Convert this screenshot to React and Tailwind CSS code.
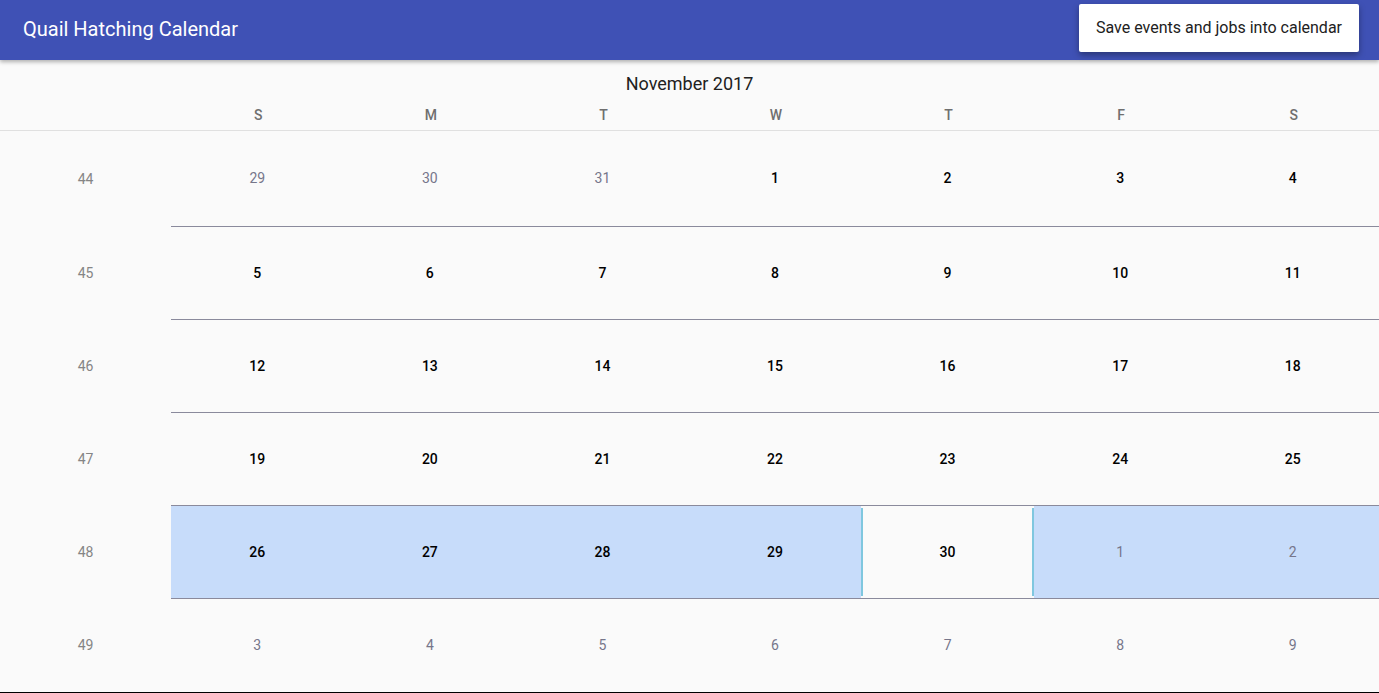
import React from 'react';

const DAYS = ['S', 'M', 'T', 'W', 'T', 'F', 'S'];

// each week: [weekNumber, [[day, inMonth], ...]]
const WEEKS = [
  [44, [[29, false], [30, false], [31, false], [1, true], [2, true], [3, true], [4, true]]],
  [45, [[5, true], [6, true], [7, true], [8, true], [9, true], [10, true], [11, true]]],
  [46, [[12, true], [13, true], [14, true], [15, true], [16, true], [17, true], [18, true]]],
  [47, [[19, true], [20, true], [21, true], [22, true], [23, true], [24, true], [25, true]]],
  [48, [[26, true], [27, true], [28, true], [29, true], [30, true], [1, false], [2, false]]],
  [49, [[3, false], [4, false], [5, false], [6, false], [7, false], [8, false], [9, false]]],
];

const SELECTED_WEEK = 48;
const SELECTED_DAY = 30;

function DayCell({ day, inMonth, selected }) {
  if (selected) {
    return (
      <div className="flex py-[2px] bg-[#fafafa]">
        <div className="flex-1 flex items-center justify-center border-l-2 border-r-2 border-[#7fc7df]">
          <span className="text-[14px] font-medium text-black">{day}</span>
        </div>
      </div>
    );
  }
  return (
    <div className="flex items-center justify-center">
      <span className={inMonth ? 'text-[14px] font-medium text-black' : 'text-[14px] text-[#76768a]'}>
        {day}
      </span>
    </div>
  );
}

function WeekRow({ week, days, first, last }) {
  const highlighted = week === SELECTED_WEEK;
  return (
    <div className={`flex ${first ? 'h-[96px]' : 'h-[93px]'}`}>
      <div className="w-[171px] flex items-center justify-center">
        <span className="text-[14px] text-[#858585]">{week}</span>
      </div>
      <div
        className={`flex-1 grid grid-cols-7 ${last ? '' : 'border-b border-[#8a8a9c]'} ${
          highlighted ? 'bg-[#c7dcfa]' : ''
        }`}
      >
        {days.map(([day, inMonth], i) => (
          <DayCell
            key={i}
            day={day}
            inMonth={inMonth}
            selected={highlighted && inMonth && day === SELECTED_DAY}
          />
        ))}
      </div>
    </div>
  );
}

export default function App() {
  return (
    <div className="w-[1379px] h-[693px] overflow-hidden bg-[#fafafa] flex flex-col font-['Roboto',sans-serif]">
      {/* App bar */}
      <header className="relative z-10 h-[60px] shrink-0 bg-[#3f51b5] flex items-start justify-between shadow-[0_2px_4px_rgba(0,0,0,0.3)]">
        <h1 className="pl-[23px] pt-[16px] text-[20px] leading-[26px] text-white">Quail Hatching Calendar</h1>
        <button className="mt-[4px] mr-[20px] h-[48px] w-[280px] bg-white rounded-[2px] text-[16px] text-[#212121] shadow-[0_3px_6px_rgba(0,0,0,0.35)]">
          Save events and jobs into calendar
        </button>
      </header>

      {/* Calendar */}
      <main className="flex-1 flex flex-col">
        <div className="pt-[12px] h-[36px] text-center text-[18px] leading-[24px] text-[#212121]">November 2017</div>
        <div className="flex h-[35px] border-b border-[#e0e0e0]">
          <div className="w-[171px]" />
          <div className="flex-1 grid grid-cols-7">
            {DAYS.map((d, i) => (
              <div key={i} className="flex items-center justify-center pt-[4px] pl-[2px]">
                <span className="text-[14px] font-medium text-[#6f6f6f]">{d}</span>
              </div>
            ))}
          </div>
        </div>
        {WEEKS.map(([week, days], i) => (
          <WeekRow key={week} week={week} days={days} first={i === 0} last={i === WEEKS.length - 1} />
        ))}
        <div className="flex-1" />
        <div className="h-[2px] bg-black" />
      </main>
    </div>
  );
}
